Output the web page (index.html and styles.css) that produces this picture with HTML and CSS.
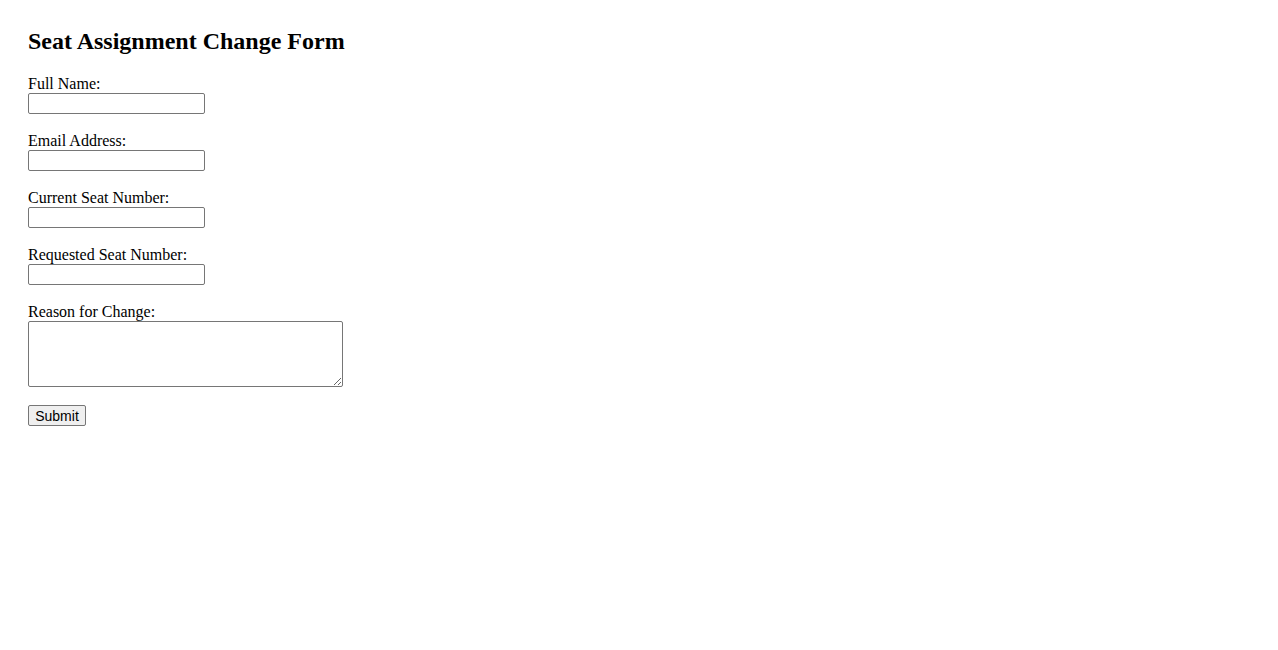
FILE: index.html
```html
<!DOCTYPE html>
<html lang="en">
<head>
    <meta charset="UTF-8">
    <meta name="viewport" content="width=device-width, initial-scale=1.0">
    <title>Seat Assignment Change Form</title>
    <link rel="stylesheet" href="styles.css">
</head>
<body>
    <div class="page">
        <h2>Seat Assignment Change Form</h2>
        <form class="seat-form">
            <div class="field">
                <label for="fullName">Full Name:</label>
                <input type="text" id="fullName" name="fullName">
            </div>
            <div class="field">
                <label for="email">Email Address:</label>
                <input type="email" id="email" name="email">
            </div>
            <div class="field">
                <label for="currentSeat">Current Seat Number:</label>
                <input type="text" id="currentSeat" name="currentSeat">
            </div>
            <div class="field">
                <label for="requestedSeat">Requested Seat Number:</label>
                <input type="text" id="requestedSeat" name="requestedSeat">
            </div>
            <div class="field">
                <label for="reason">Reason for Change:</label>
                <textarea id="reason" name="reason"></textarea>
            </div>
            <button type="submit" class="submit-btn">Submit</button>
        </form>
    </div>
</body>
</html>
```

FILE: styles.css
```css
body {
    margin: 8px;
    font-family: "Liberation Serif", "Times New Roman", serif;
    font-size: 16px;
    color: #000;
    background: #fff;
}

.page {
    padding: 19px 20px 20px;
}

h2 {
    margin: 0 0 20px;
    font-size: 24px;
    font-weight: bold;
    line-height: 28px;
}

.field {
    margin-bottom: 18px;
}

.field label {
    display: block;
    line-height: 18px;
}

.field input,
.field textarea {
    display: block;
    box-sizing: border-box;
    border: 1px solid #767676;
    border-radius: 2px;
    padding: 1px 2px;
    font-family: "Liberation Sans", Arial, sans-serif;
    font-size: 13.33px;
    background: #fff;
}

.field input {
    width: 177px;
    height: 21px;
}

.field textarea {
    width: 315px;
    height: 66px;
    resize: both;
}

.submit-btn {
    display: block;
    box-sizing: border-box;
    width: 58px;
    height: 21px;
    padding: 1px 6px;
    border: 1px solid #767676;
    border-radius: 2px;
    background: #efefef;
    font-family: "Liberation Sans", Arial, sans-serif;
    font-size: 14px;
    color: #000;
}
```
